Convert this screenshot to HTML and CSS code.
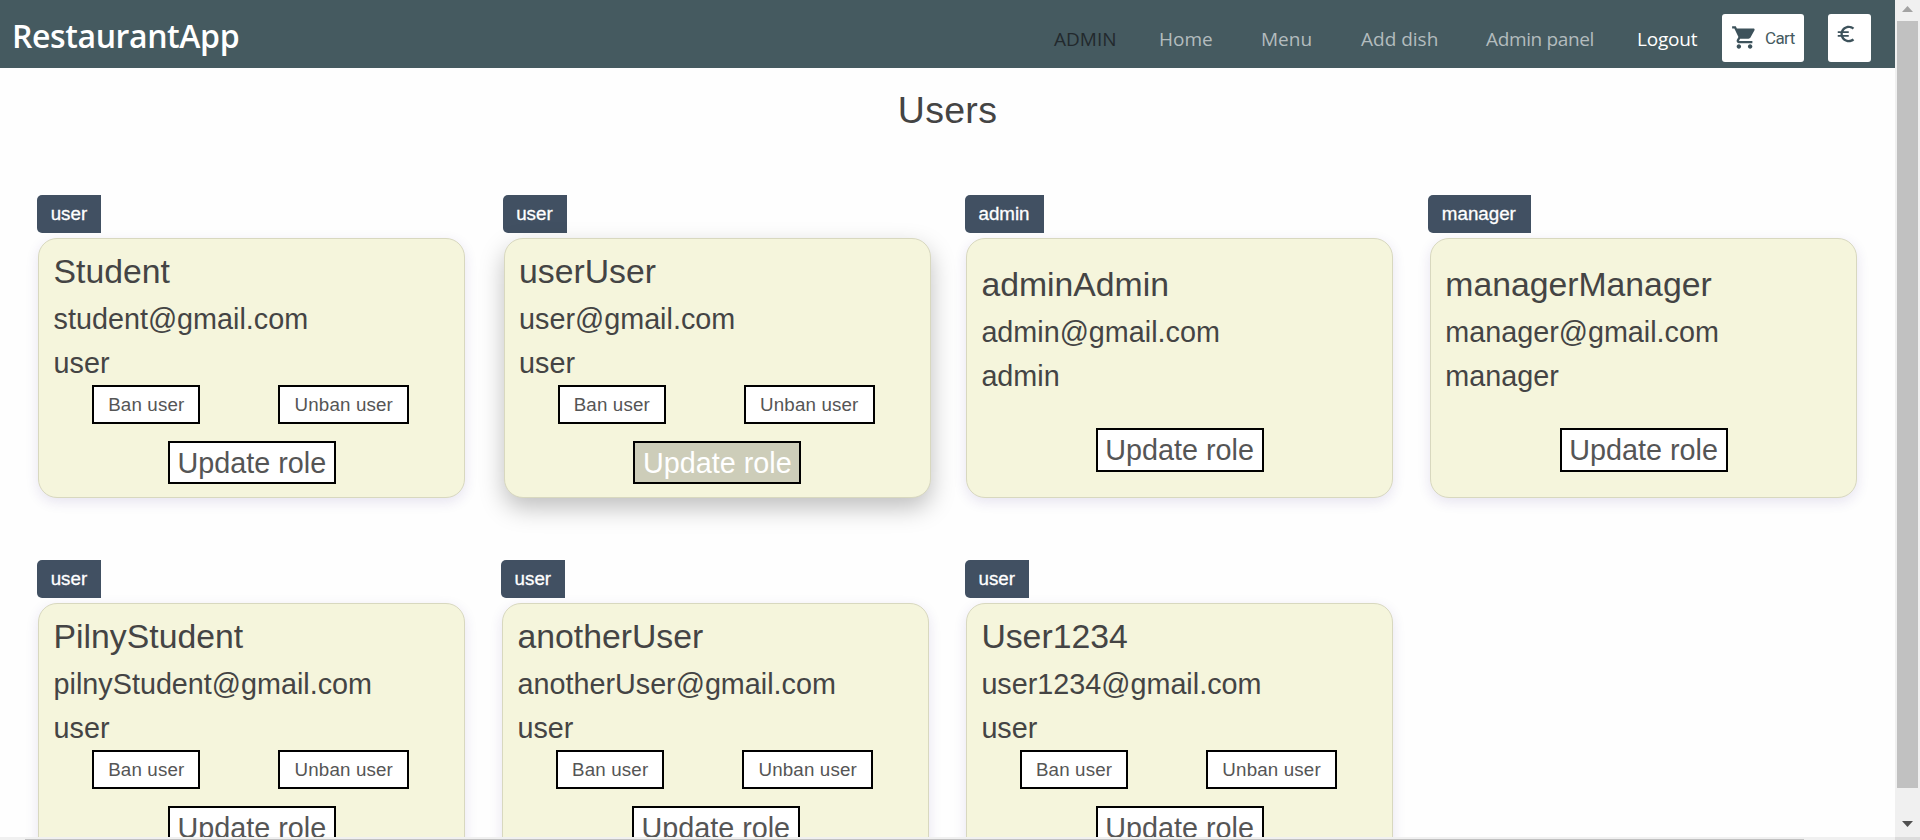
FILE: index.html
```html
<!DOCTYPE html>
<html lang="en">
<head>
<meta charset="utf-8">
<title>RestaurantApp</title>
<link rel="stylesheet" href="styles.css">
</head>
<body>
<div class="window">
  <div class="page">
    <header class="navbar">
      <div class="brand">RestaurantApp</div>
      <nav class="nav">
        <span class="link role">ADMIN</span>
        <a class="link home">Home</a>
        <a class="link menu">Menu</a>
        <a class="link add">Add dish</a>
        <a class="link panel">Admin panel</a>
        <a class="link logout">Logout</a>
      </nav>
      <button class="cart"><svg class="cart-icon" viewBox="0 0 24 24"><path d="M7 18c-1.100 0-1.990.9-1.990 2S5.900 22 7 22s2-.9 2-2-.9-2-2-2zM1 2v2h2l3.600 7.590-1.350 2.450c-.16.280-.25.610-.25.960 0 1.100.9 2 2 2h12v-2H7.420c-.14 0-.25-.11-.25-.25l.03-.12.900-1.630h7.450c.75 0 1.410-.41 1.750-1.030l3.580-6.490c.08-.14.120-.31.120-.48 0-.55-.45-1-1-1H5.210l-.94-2H1zm16 16c-1.100 0-1.990.9-1.990 2s.89 2 1.990 2 2-.9 2-2-.9-2-2-2z"/></svg><span>Cart</span></button>
      <button class="currency"><svg class="euro-icon" viewBox="0 0 24 24"><path d="M15 18.500c-2.510 0-4.680-1.420-5.760-3.500H15v-2H8.580c-.05-.33-.08-.66-.08-1s.03-.67.080-1H15V9H9.240C10.320 6.920 12.500 5.500 15 5.500c1.610 0 3.090.59 4.230 1.570L21 5.300C19.410 3.870 17.300 3 15 3c-3.920 0-7.240 2.510-8.480 6H3v2h3.060c-.04.33-.06.66-.06 1s.02.67.060 1H3v2h3.520c1.240 3.490 4.560 6 8.480 6 2.310 0 4.410-.87 6-2.300l-1.780-1.770c-1.130.98-2.600 1.570-4.220 1.570z"/></svg></button>
    </header>
    <h1 class="title">Users</h1>
    <main class="grid">
      <section class="cell">
        <span class="badge">user</span>
        <div class="card">
          <h2 class="name">Student</h2><p class="email">student@gmail.com</p><p class="kind">user</p>
          <div class="actions"><button class="btn ban">Ban user</button><button class="btn unban">Unban user</button></div>
          <button class="btn update">Update role</button>
        </div>
      </section>
      <section class="cell hovered">
        <span class="badge">user</span>
        <div class="card">
          <h2 class="name">userUser</h2><p class="email">user@gmail.com</p><p class="kind">user</p>
          <div class="actions"><button class="btn ban">Ban user</button><button class="btn unban">Unban user</button></div>
          <button class="btn update active">Update role</button>
        </div>
      </section>
      <section class="cell">
        <span class="badge admin">admin</span>
        <div class="card staff">
          <h2 class="name">adminAdmin</h2><p class="email">admin@gmail.com</p><p class="kind">admin</p>
          <button class="btn update">Update role</button>
        </div>
      </section>
      <section class="cell">
        <span class="badge manager">manager</span>
        <div class="card staff">
          <h2 class="name">managerManager</h2><p class="email">manager@gmail.com</p><p class="kind">manager</p>
          <button class="btn update">Update role</button>
        </div>
      </section>
      <section class="cell">
        <span class="badge">user</span>
        <div class="card">
          <h2 class="name">PilnyStudent</h2><p class="email">pilnyStudent@gmail.com</p><p class="kind">user</p>
          <div class="actions"><button class="btn ban">Ban user</button><button class="btn unban">Unban user</button></div>
          <button class="btn update">Update role</button>
        </div>
      </section>
      <section class="cell">
        <span class="badge">user</span>
        <div class="card">
          <h2 class="name">anotherUser</h2><p class="email">anotherUser@gmail.com</p><p class="kind">user</p>
          <div class="actions"><button class="btn ban">Ban user</button><button class="btn unban">Unban user</button></div>
          <button class="btn update">Update role</button>
        </div>
      </section>
      <section class="cell">
        <span class="badge">user</span>
        <div class="card">
          <h2 class="name">User1234</h2><p class="email">user1234@gmail.com</p><p class="kind">user</p>
          <div class="actions"><button class="btn ban">Ban user</button><button class="btn unban">Unban user</button></div>
          <button class="btn update">Update role</button>
        </div>
      </section>
    </main>
  </div>
  <div class="vbar">
    <svg class="arrow up" viewBox="0 0 11 6"><path d="M5.500 0L11 6H0z"/></svg>
    <div class="vthumb"></div>
    <svg class="arrow down" viewBox="0 0 11 6"><path d="M0 0H11L5.500 6z"/></svg>
  </div>
  <div class="hbar"><div class="hthumb"></div></div>
  <div class="corner"></div>
</div>
</body>
</html>
```
FILE: styles.css
```css
* { box-sizing: border-box; }
body { margin: 0; overflow: hidden; background: #fff; color: #444; font-family: "Liberation Sans", Arial, sans-serif; }
h1, h2, p { margin: 0; font-weight: 400; }
button { margin: 0; padding: 0; border: 0; background: #fff; font-family: inherit; }

.window { display: grid; grid-template: 837px 3px / 1895px 25px; width: 1920px; height: 840px; }
.page { overflow: hidden; background: #fefefe; }

.navbar { display: flex; align-items: flex-start; height: 68px; padding-left: 12px; background: #455a60; font-family: "Open Sans", "Noto Sans", sans-serif; white-space: nowrap; }
.brand { width: 1042px; padding-top: 14px; color: #fff; font-size: 32px; font-weight: 600; line-height: 44px; letter-spacing: -0.4px; }
.nav { display: flex; padding-top: 26px; font-size: 19px; line-height: 26px; }
.link { color: #b3bcbe; }
.role { width: 105px; color: #22292d; }
.home { width: 102px; }
.menu { width: 100px; }
.add { width: 125px; }
.panel { width: 151px; letter-spacing: -0.35px; }
.logout { width: 85px; color: #fff; letter-spacing: -0.2px; }
.cart { display: flex; align-items: center; width: 82px; height: 48px; margin-top: 14px; padding: 0 0 1px 9px; border-radius: 3px; color: #455a60; font: 17px/20px Roboto, sans-serif; letter-spacing: -0.6px; }
.cart-icon { width: 27px; height: 27px; margin-right: 7px; fill: #3d525b; }
.currency { display: flex; width: 43px; height: 48px; margin: 14px 0 0 24px; padding: 9px 0 0 7px; border-radius: 3px; }
.euro-icon { width: 22px; height: 22px; fill: #3d525b; }

.title { margin-top: 19px; font-size: 37.5px; line-height: 46px; letter-spacing: 0.3px; text-align: center; }

.grid { display: grid; grid-template-columns: repeat(4, 427px); column-gap: 36.9px; row-gap: 62px; margin-top: 62px; padding-left: 38.3px; }
.cell { display: flex; flex-direction: column; align-items: flex-start; height: 303px; }
.hovered { margin: 0 -1.6px 0 1.6px; }
.badge { width: 64px; height: 38px; margin: 0 0 5px -1px; padding-left: 13.4px; border-radius: 5px 0 0 5px; background: #415062; color: #fff; font-size: 18.75px; line-height: 37px; -webkit-text-stroke: 0.3px #fff; }
.badge.admin { width: 79px; }
.badge.manager { width: 103px; margin-left: -1.500px; }
.card { display: flex; flex-direction: column; width: 427px; height: 260px; padding: 12px 0 0 13px; border: 1px solid #d8d8bf; border-radius: 19px; background: #f5f5dc; box-shadow: 0 4px 13px rgba(60, 30, 130, 0.12); }
.hovered .card { box-shadow: 0 10px 24px rgba(0, 0, 0, 0.25); }
.staff { padding-top: 25px; }
.name, .email, .kind { padding-left: 1.3px; }
.name { font-size: 33.75px; line-height: 40px; }
.email { margin-top: 10px; font-size: 28.75px; line-height: 36px; }
.kind { margin-top: 8px; font-size: 28.75px; line-height: 36px; }
.actions { display: flex; gap: 78px; margin: 4px 0 0 40px; }
.btn { border: 2px solid #000; color: #555; }
.ban, .unban { height: 39px; font-size: 18.75px; line-height: 35px; letter-spacing: 0.15px; }
.ban { width: 108px; }
.unban { width: 131px; }
.update { width: 168px; height: 43px; margin: 17px 0 0 115.6px; font-size: 28.750px; line-height: 38px; }
.staff .update { height: 44px; margin-top: 34px; }
.update.active { background: #cdcdb9; color: #fff; }

.vbar { display: flex; flex-direction: column; align-items: center; padding-top: 6px; background: #f0f0f0; }
.arrow { width: 11px; height: 6px; }
.up { fill: #a3a3a3; }
.down { fill: #505050; }
.vthumb { width: 21px; height: 767px; margin: 9px 0 33px; background: #c1c1c1; }
.hbar { padding: 2px 91px 0 25px; background: #f0f0f0; }
.hthumb { height: 1px; background: #c1c1c1; }
.corner { background: #dcdcdc; }
```
